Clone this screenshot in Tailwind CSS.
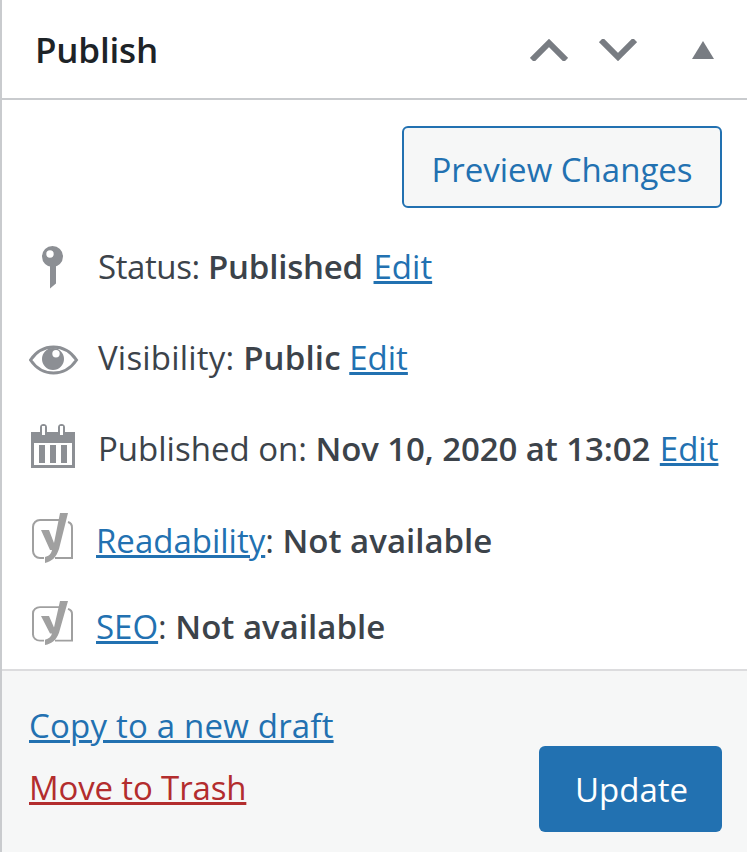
<!DOCTYPE html>
<html lang="en">
<head>
  <meta charset="UTF-8">
  <title>Publish</title>
  <script src="https://cdn.jsdelivr.net/npm/@tailwindcss/browser@4"></script>
</head>
<body class="bg-white">
  <div class="w-[747px] h-[852px] overflow-hidden border-l-2 border-[#c9cbce] flex flex-col font-['Open_Sans',sans-serif] text-[33px] text-[#3c434a]">
    <div class="h-[100px] shrink-0 border-b-2 border-[#c9cbce] flex items-center pl-[33px] pt-[2px]">
      <h2 class="text-[35px] leading-[40px] font-semibold text-[#1d2327] tracking-[-0.2px]">Publish</h2>
      <div class="ml-auto flex items-center text-[#787c82]">
        <svg class="w-[38px] h-[22px]" viewBox="0 0 38 22" fill="none" stroke="currentColor" stroke-width="6"><path d="M2 21L19 4L36 21"/></svg>
        <svg class="w-[38px] h-[22px] ml-[31px]" viewBox="0 0 38 22" fill="none" stroke="currentColor" stroke-width="6"><path d="M2 1L19 18L36 1"/></svg>
        <svg class="w-[22px] h-[18px] ml-[55px] mr-[33px]" viewBox="0 0 22 18" fill="currentColor"><path d="M11 0L22 18H0Z"/></svg>
      </div>
    </div>

    <div class="h-[571px] shrink-0 border-b-2 border-[#dcdcde]">
      <div class="flex justify-end pt-[26px] pr-[25px]">
        <a class="w-[320px] h-[82px] flex items-center justify-center pt-[5px] rounded-[6px] border-2 border-[#2271b1] bg-[#f6f7f7] text-[#2271b1]">Preview Changes</a>
      </div>

      <div class="h-[91px] mt-[13px] flex items-center">
        <svg class="w-[50px] h-[46px] ml-[27px] mr-[19px] shrink-0" viewBox="0 0 50 46" fill="#8c8f94"><path fill-rule="evenodd" d="M23.500 2a10.500 10.500 0 1 1 0 21a10.500 10.500 0 1 1 0-21ZM21 6.300a3.700 3.700 0 1 0 0 7.400a3.700 3.700 0 1 0 0-7.400Z"/><path d="M21 20h6v19.500l-6 5Z"/></svg>
        <span class="whitespace-nowrap"><span class="tracking-[-0.4px]">Status: </span><b class="font-semibold tracking-[-0.2px]">Published</b> <a class="ml-[2px] text-[#2271b1] underline">Edit</a></span>
      </div>
      <div class="h-[91px] flex items-center">
        <svg class="w-[50px] h-[30px] ml-[27px] mr-[19px] mt-[4px] shrink-0" viewBox="0 0 50 30"><path d="M1.500 15C8 5.500 16 2 24.500 2S41 5.500 47.500 15C41 24.500 33 28 24.500 28S8 24.500 1.500 15Z" fill="none" stroke="#8c8f94" stroke-width="3"/><path fill="#8c8f94" fill-rule="evenodd" d="M24 3a11 11 0 1 1 0 22a11 11 0 1 1 0-22ZM27 5a3.700 3.700 0 1 0 0 7.400a3.700 3.700 0 1 0 0-7.400Z"/></svg>
        <span class="whitespace-nowrap"><span class="tracking-[0.2px]">Visibility: </span><b class="font-semibold tracking-[0.15px]">Public</b> <a class="text-[#2271b1] underline">Edit</a></span>
      </div>
      <div class="h-[91px] flex items-center">
        <svg class="w-[44px] h-[46px] ml-[29px] mr-[23px] mb-[3px] shrink-0" viewBox="0 0 44 46" fill="#8c8f94"><path fill-rule="evenodd" d="M0 8h9V3.500a3.500 3.500 0 0 1 7 0V8h11V3.500a3.500 3.500 0 0 1 7 0V8h10v36H0V8Zm11-6v9h3V2h-3Zm18 0v9h3V2h-3ZM3 19v22h38V19H3Zm5 2h6v18H8V21Zm11 0h6v18h-6V21Zm11 0h6v18h-6V21Z"/></svg>
        <span class="whitespace-nowrap">Published on: <b class="font-semibold tracking-[-0.1px]">Nov 10, 2020 at 13:02</b> <a class="ml-[1px] text-[#2271b1] underline">Edit</a></span>
      </div>
      <div class="h-[90px] flex items-center">
        <svg class="w-[44px] h-[52px] ml-[28px] mr-[22px] mb-[2px] shrink-0" viewBox="0 0 44 52" fill="none"><path d="M30 8H10a7 7 0 0 0-7 7v24a7 7 0 0 0 7 7h4M38 10a6 6 0 0 1 4 6v30H25" stroke="#a0a0a0" stroke-width="2"/><path d="M11 18h8l5 13 6-30h8L29 37c-3 9-7 12-14 14v-6c4-1 6-3 7-7h-2Z" fill="#a0a0a0"/></svg>
        <span class="whitespace-nowrap mt-[4px]"><a class="text-[#2271b1] underline">Readability</a>: <b class="font-semibold">Not available</b></span>
      </div>
      <div class="h-[82px] flex items-center">
        <svg class="w-[44px] h-[46px] ml-[28px] mr-[22px] mb-[4px] shrink-0" viewBox="0 0 44 52" preserveAspectRatio="none" fill="none"><path d="M30 8H10a7 7 0 0 0-7 7v24a7 7 0 0 0 7 7h4M38 10a6 6 0 0 1 4 6v30H25" stroke="#a0a0a0" stroke-width="2"/><path d="M11 18h8l5 13 6-30h8L29 37c-3 9-7 12-14 14v-6c4-1 6-3 7-7h-2Z" fill="#a0a0a0"/></svg>
        <span class="whitespace-nowrap mt-[4px]"><a class="text-[#2271b1] underline">SEO</a>: <b class="font-semibold">Not available</b></span>
      </div>
    </div>

    <div class="flex-1 bg-[#f6f7f7] flex justify-between pl-[27px] pr-[25px]">
      <div class="flex flex-col pt-[34px] gap-[21px]">
        <a class="text-[#2271b1] underline leading-[41px] tracking-[0.2px]">Copy to a new draft</a>
        <a class="text-[#b32d2e] underline leading-[41px] tracking-[-0.15px]">Move to Trash</a>
      </div>
      <a class="mt-[75px] w-[183px] h-[86px] flex items-center justify-center pt-[2px] pl-[2px] rounded-[6px] bg-[#2271b1] text-white">Update</a>
    </div>
  </div>
</body>
</html>
